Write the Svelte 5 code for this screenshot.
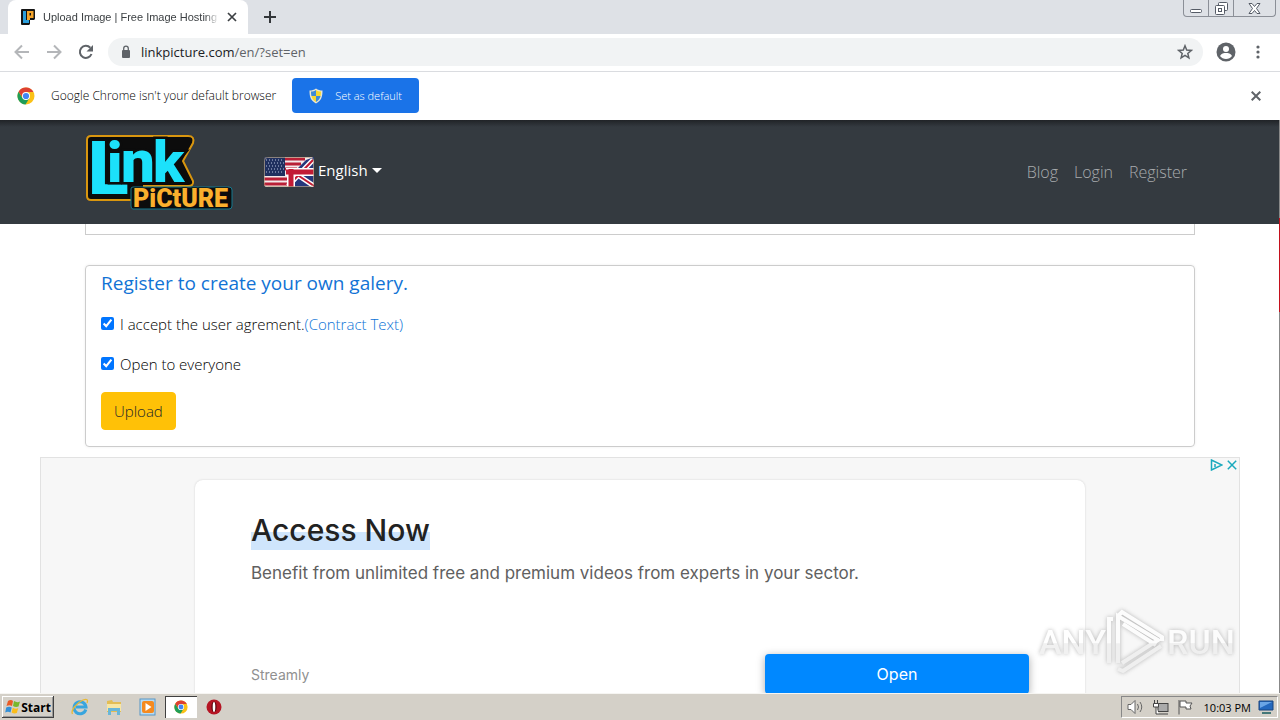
<script lang="ts">
  let accepted = $state(true);
  let open = $state(true);
</script>

<div class="desktop">
  <header class="tabs">
    <div class="tab">
      <svg class="fav" viewBox="0 0 16 16" width="16" height="16"><path d="M2 0h12q1 0 1 1v9l-1 1h-4v4l-1 1H2q-1 0-1-1V1q0-1 1-1z" fill="#151515"/><path d="M3 2h3v9h3v3H3z" fill="#2b9fdc"/><path fill-rule="evenodd" d="M7 2h6.500v7H10v2H7zM9.500 4v2.500h1.500V4z" fill="#f5a52b"/></svg>
      <span class="tabtitle">Upload Image | Free Image Hosting |</span>
      <button class="plain" aria-label="Close tab"><svg width="10" height="10" viewBox="0 0 10 10"><path d="M1 1l8 8M9 1L1 9" stroke="#3c4043" stroke-width="1.700"/></svg></button>
    </div>
    <button class="plain newtab" aria-label="New tab"><svg width="12" height="12" viewBox="0 0 12 12"><path d="M6 0v12M0 6h12" stroke="#33363a" stroke-width="2"/></svg></button>
    <div class="winbtns">
      <button aria-label="Minimize"><svg width="13" height="12" viewBox="0 0 13 12"><rect x=".5" y="7.500" width="11" height="3" rx="1" fill="#fff" stroke="#555b66"/></svg></button>
      <button aria-label="Restore"><svg width="13" height="13" viewBox="0 0 13 13" fill="#fff" stroke="#555b66"><rect x="3.500" y=".5" width="9" height="8" rx="1"/><rect x=".5" y="3.500" width="9" height="9" rx="1"/><rect x="3.500" y="6.500" width="3" height="3"/></svg></button>
      <button class="wide" aria-label="Close"><svg width="13" height="11" viewBox="0 0 13 11"><path d="M1 .5h3l2.500 3L9 .5h3L8.500 5.500l3.500 5H9L6.500 7.500 4 10.500H1l3.500-5z" fill="#fff" stroke="#555b66"/></svg></button>
    </div>
  </header>

  <div class="toolbar">
    <button class="plain" aria-label="Back"><svg width="16" height="16" viewBox="0 0 16 16" fill="none" stroke="#b4b6b9" stroke-width="2"><path d="M15 8H2M8 1.500L1.500 8 8 14.500"/></svg></button>
    <button class="plain" aria-label="Forward"><svg width="16" height="16" viewBox="0 0 16 16" fill="none" stroke="#b4b6b9" stroke-width="2"><path d="M1 8h13M8 1.500L14.500 8 8 14.500"/></svg></button>
    <button class="plain" aria-label="Reload"><svg width="16" height="16" viewBox="0 0 16 16"><path d="M13.500 10A6 6 0 1 1 12.300 3.800" fill="none" stroke="#5f6368" stroke-width="2"/><path d="M15 1v6.500H8.500z" fill="#5f6368"/></svg></button>
    <div class="omni">
      <svg width="10" height="14" viewBox="0 0 10 14"><rect x="1" y="5" width="8" height="8" rx="1" fill="#5f6368"/><path d="M2.700 6V3.500a2.300 2.300 0 0 1 4.600 0V6" fill="none" stroke="#5f6368" stroke-width="1.300"/></svg>
      <span class="url">linkpicture.com<em>/en/?set=en</em></span>
      <button class="plain" aria-label="Bookmark"><svg width="16" height="16" viewBox="0 0 16 16"><path d="M8 1.800l1.700 4.300 4.600.3-3.500 3 1.100 4.500L8 11.400l-3.900 2.500 1.100-4.500-3.500-3 4.600-.3z" fill="none" stroke="#5f6368" stroke-width="1.500"/></svg></button>
    </div>
    <button class="plain" aria-label="Profile"><svg width="20" height="20" viewBox="0 0 20 20"><circle cx="10" cy="10" r="9.500" fill="#5f6368"/><circle cx="10" cy="7" r="3" fill="#fff"/><path d="M4 14c1-2.500 4-3 6-3s5 .5 6 3c-1.500 2-3.500 3-6 3s-4.500-1-6-3z" fill="#fff"/></svg></button>
    <button class="plain menu" aria-label="Menu"><svg width="4" height="14" viewBox="0 0 4 14" fill="#5f6368"><circle cx="2" cy="2" r="1.600"/><circle cx="2" cy="7" r="1.600"/><circle cx="2" cy="12" r="1.600"/></svg></button>
  </div>

  {#snippet chrome(size: number)}
    <svg width={size} height={size} viewBox="0 0 18 18"><circle cx="9" cy="9" r="8.500" fill="#fbc116"/><path d="M1.600 4.700A8.500 8.500 0 0 0 8.500 17.500L12.500 11 9 9 5.500 11z" fill="#1f9d58"/><path d="M1.600 4.700A8.500 8.500 0 0 1 16.400 5H9L5.200 10z" fill="#dd4033"/><circle cx="9" cy="9" r="4" fill="#fff"/><circle cx="9" cy="9" r="3.100" fill="#4285f4"/></svg>
  {/snippet}

  <div class="infobar">
    {@render chrome(18)}
    <span class="info">Google Chrome isn't your default browser</span>
    <button class="default">
      <svg width="14" height="16" viewBox="0 0 14 16"><path d="M7 .5c2 1.500 4 2 6.500 2 0 6-1 10-6.500 13C1.500 12.500.5 8.500.5 2.500 3 2.500 5 2 7 .5z" fill="#e8e6d4"/><path d="M7 2C5.500 3 4 3.500 2 3.600 2 5 2 6.500 2.400 8H7z" fill="#3c8ad8"/><path d="M7 2c1.500 1 3 1.500 5 1.600 0 1.400 0 2.900-.4 4.400H7z" fill="#f5d731"/><path d="M2.400 8H7v6C4.500 12.500 3 10.500 2.400 8z" fill="#f5d731"/><path d="M11.600 8H7v6c2.500-1.500 4-3.500 4.600-6z" fill="#3c8ad8"/></svg>
      Set as default
    </button>
    <button class="plain dismiss" aria-label="Dismiss"><svg width="10" height="10" viewBox="0 0 10 10"><path d="M.7.7l8.600 8.600M9.300.7L.7 9.300" stroke="#5f6368" stroke-width="2"/></svg></button>
  </div>

  <main class="page">
    <nav>
      <div class="container bar">
        <a class="brand" href="#home" aria-label="Link Picture">
          <svg width="148" height="76" viewBox="0 0 148 76">
            <path d="M6 2h97q7 0 5 7L98 27l10 20q1 5-5 5H59v9q0 5-5 5H6q-4 0-4-4V6q0-4 4-4z" fill="#0c0c0c" stroke="#d9960f" stroke-width="2"/>
            <path d="M48 53h96q3 0 3 3v16q0 3-3 3H48q-2 0-2-3V55q0-2 2-2z" fill="#0c0c0c" stroke="#14788f"/>
            <text class="logotext" y="48" font-size="55" fill="#1ce1fb" stroke="#0c0c0c" stroke-width="5"><tspan x="3" y="60" font-size="75">L</tspan><tspan x="22" y="48" font-size="56">i</tspan><tspan x="36" font-size="60">n</tspan><tspan x="68" font-size="57">k</tspan></text>
            <text class="logotext small" x="48" y="73" font-size="25" fill="#fbb02d" stroke="#0c0c0c" stroke-width="1">PiCtURE</text>
          </svg>
        </a>
        <button class="lang">
          <svg width="50" height="30" viewBox="0 0 50 30"><rect width="50" height="30" rx="3" fill="#f3e9ea"/><path d="M0 22h24M0 27h24M21 2h20M21 7h16M21 12h12" stroke="#b91f36" stroke-width="3"/><path d="M0 2Q0 0 3 0h18v19H0z" fill="#20305f"/><path d="M2 3h18M4 6h16M2 9h18M4 12h16M2 15h18" stroke="#b9c4df" stroke-dasharray="1 2"/><path d="M50 0v30H24v-9L42 3z" fill="#26377b"/><path d="M24 29L49 3M32 17l18 12" stroke="#fff" stroke-width="5"/><path d="M24 29L49 3M32 17l18 12" stroke="#c21b35" stroke-width="2"/><path d="M22 15h28M27 12v18" stroke="#fff" stroke-width="8"/><path d="M22 15h28M27 12v18" stroke="#c21b35" stroke-width="5"/><rect x=".5" y=".5" width="49" height="29" rx="3" fill="none" stroke="#b9a58a" stroke-opacity=".7"/></svg>
          <span>English<i class="caret"></i></span>
        </button>
        <div class="links"><a href="#blog">Blog</a><a href="#login">Login</a><a href="#register">Register</a></div>
      </div>
    </nav>

    <div class="container">
      <div class="previous"></div>
      <section class="card">
        <h1><a href="#signup">Register to create your own galery.</a></h1>
        <div class="check"><input id="accept" type="checkbox" bind:checked={accepted} /><label for="accept">I accept the user agrement.</label><a href="#contract">(Contract Text)</a></div>
        <div class="check"><input id="open" type="checkbox" bind:checked={open} /><label for="open">Open to everyone</label></div>
        <button class="upload">Upload</button>
      </section>
    </div>

    <aside class="ad">
      <div class="adchoices">
        <svg width="13" height="12" viewBox="0 0 13 12" fill="none" stroke="#1aa9bd" stroke-width="1.500"><path d="M1.500 1v10L12 6z"/><path d="M5 5v3"/></svg>
        <svg width="10" height="10" viewBox="0 0 10 10"><path d="M.8.8l8.400 8.400M9.200.8L.8 9.200" stroke="#1aa9bd" stroke-width="1.500"/></svg>
      </div>
      <div class="adcard">
        <h2><span>Access Now</span></h2>
        <p>Benefit from unlimited free and premium videos from experts in your sector.</p>
        <div class="adfoot"><span>Streamly</span><button>Open</button></div>
      </div>
    </aside>

    <div class="edge"><i></i></div>
    <div class="watermark">
      <svg width="200" height="70" viewBox="0 0 200 70">
        <defs><linearGradient id="fade" x1="0" y1="0" x2="0" y2="1"><stop offset=".52" stop-color="#fff"/><stop offset=".54" stop-color="#ececec"/></linearGradient></defs>
        <text x="3" y="48">ANY</text><text x="131" y="48">RUN</text>
        <g fill="none" stroke="url(#fade)" stroke-width="4"><path d="M82 57V10l40 24-36 23M73 57V13h4M82 63l5 2 38-25M87 18l33 21M82 10l4-4 40 25v4"/></g>
      </svg>
    </div>
  </main>

  <footer>
    <button class="start"><svg width="16" height="16" viewBox="0 0 16 16"><path d="M3 2q3-2 5 0L7 7Q4.500 5.500 1.500 7z" fill="#ea5b25"/><path d="M9 2q3 2 6 .5L13.500 7.500q-3 1-5.500-.5z" fill="#78b72b"/><path d="M1.200 8.500q3-1.500 5.500 0l-1.200 5q-2.500-1.500-5.300 0z" fill="#3390d8"/><path d="M7.800 8.800q3 1.500 5.500.3l-1.500 5q-2.500 1-5.200-.5z" fill="#fbbd1a"/></svg>Start</button>
    <button class="task" aria-label="Internet Explorer"><svg width="18" height="18" viewBox="0 0 18 18"><path d="M14.800 11.500A6 6 0 1 1 15 9H5" fill="none" stroke="#38a5de" stroke-width="3"/><path d="M1.500 16C-.5 13 5 5 12 2q6-2 4 3" fill="none" stroke="#e8b936" stroke-width="1.300"/></svg></button>
    <button class="task" aria-label="Explorer"><svg width="18" height="18" viewBox="0 0 18 18"><path d="M2 3l5-1 1 2h8v10H2z" fill="#e3bd55"/><path d="M2 6h14v7H2z" fill="#f8e6a3"/><path d="M3 10h12v7h-3v-4H6v4H3z" fill="#69b6d8"/></svg></button>
    <button class="task" aria-label="Media Player"><svg width="18" height="18" viewBox="0 0 18 18"><rect x="1" y="1" width="15" height="16" fill="#b9dcf3" stroke="#5796c6"/><rect x="3" y="3" width="12" height="12" rx="2" fill="#f58a1f"/><path d="M6.500 5v8l6-4z" fill="#fff"/></svg></button>
    <button class="task active" aria-label="Chrome">{@render chrome(14)}</button>
    <button class="task" aria-label="Opera"><svg width="16" height="16" viewBox="0 0 16 16"><circle cx="8" cy="8" r="7.500" fill="#b51524"/><ellipse cx="8" cy="8" rx="2.600" ry="5.200" fill="#5f0710"/><ellipse cx="8" cy="8" rx="1.300" ry="5" fill="#fff"/></svg></button>
    <div class="tray">
      <svg width="18" height="16" viewBox="0 0 18 16" fill="#fff" stroke="#666"><path d="M1 5.500h3l4-4v13l-4-4H1z"/><path d="M10.500 5q2 3 0 6M13 3q3.500 5 0 10" fill="none"/></svg>
      <svg width="18" height="16" viewBox="0 0 18 16" fill="none" stroke="#444"><rect x="6" y="4.500" width="10" height="8" fill="#aaa"/><path d="M7 15h9M4 8v7h3M2.500 1v3M5.500 1v3M1.500 4.500h5V8h-5z" fill="#fff"/></svg>
      <svg width="17" height="16" viewBox="0 0 17 16" fill="#fff" stroke="#555"><path d="M2 1v14.500"/><path d="M3 2h6v2h6l-2 3 1 3H9V8H3z"/></svg>
      <time>10:03 PM</time>
      <svg width="16" height="14" viewBox="0 0 16 14"><path d="M1 1h14v9H1z" fill="#2468be" stroke="#19447f"/><path d="M2 2h12L2 8z" fill="#6ba5e5"/><path d="M4 13h9" stroke="#477" stroke-width="2"/></svg>
    </div>
  </footer>
</div>

<style>
  :global(body) { background: #fff; }
  * { box-sizing: border-box; }
  button { font: inherit; cursor: pointer; }
  a { text-decoration: none; }
  svg { display: block; flex: none; }
  .desktop { height: 100vh; display: flex; flex-direction: column; overflow: hidden; font-family: "Open Sans", "Noto Sans", sans-serif; color: #212529; }
  .plain { border: 0; background: none; padding: 0; display: flex; }

  .tabs { flex: none; display: flex; height: 34px; background: #dee1e6; padding-left: 8px; }
  .tab { width: 240px; display: flex; align-items: center; background: #fff; border-radius: 8px 8px 0 0; padding: 0 11px 0 12px; color: #3c4043; }
  .tabtitle { flex: 1; overflow: hidden; white-space: nowrap; margin: 0 8px 0 7px; font: 11px "Liberation Sans", sans-serif; mask-image: linear-gradient(90deg, #000 92%, transparent 100%); }
  .newtab { align-self: center; margin-left: 16px; }
  .winbtns { margin: 0 4px 0 auto; display: flex; height: 17px; border: 1px solid #8b8f97; border-top: 0; border-radius: 0 0 4px 4px; }
  .winbtns button { width: 25px; border: 0; border-right: 1px solid #8b8f97; background: none; padding: 0; display: flex; align-items: center; justify-content: center; }
  .winbtns .wide { width: 41px; border-right: 0; }

  .toolbar { flex: none; display: flex; align-items: center; height: 38px; padding: 0 20px 2px 14px; gap: 16px; border-bottom: 1px solid #dadce0; }
  .omni { flex: 1; height: 28px; border-radius: 14px; background: #f1f3f4; display: flex; align-items: center; padding: 0 10px 0 13px; margin: 0 -3px 0 -2px; }
  .url { flex: 1; font-size: 13px; margin-left: 10px; color: #202124; }
  .url em { font-style: normal; color: #5f6368; }
  .menu { margin-left: 4px; }

  .infobar { flex: none; display: flex; align-items: center; height: 48px; padding: 0 19px 1px 17px; background: #fff; }
  .info { font-size: 12px; font-weight: 300; color: #000; margin: 0 16px; }
  .default { display: flex; align-items: center; gap: 12px; height: 35px; border: 0; border-radius: 4px; background: #1a73e8; color: #fff; font-size: 11px; font-weight: 300; padding: 0 17px; }
  .dismiss { margin-left: auto; }

  .page { flex: 1; min-height: 0; overflow: hidden; position: relative; background: #fff; font-size: 15px; font-weight: 300; }
  nav { background: linear-gradient(#202327, #343a40 7px); height: 104px; }
  .container { max-width: 1140px; margin: 0 auto; padding: 0 15px; }
  .bar { display: flex; align-items: center; height: 100%; }
  .logotext { font-family: "Roboto", sans-serif; font-weight: 900; paint-order: stroke; }
  .lang { display: flex; align-items: center; gap: 4px; border: 0; background: none; color: #fff; padding: 0; margin-left: 31px; font-weight: 400; }
  .lang span { display: flex; align-items: center; gap: 4px; padding-bottom: 4px; }
  .caret { border: 5px solid transparent; border-top-color: #fff; border-bottom: 0; }
  .links { margin-left: auto; display: flex; gap: 16px; padding-right: 8px; font-size: 16px; }
  .links a { color: #a8abae; }

  .previous { height: 11px; border: 1px solid #ccc; border-top: 0; }
  .card { margin-top: 30px; border: 1px solid #ccc; border-radius: 4px; padding: 4px 15px 16px; box-shadow: 0 0 3px #eee; color: #000; }
  h1 { margin: 0 0 16px; font-size: 19px; line-height: 26px; font-weight: 400; }
  h1 a { color: #1273d5; }
  .check { display: flex; align-items: center; height: 24px; margin-bottom: 16px; }
  .check input { margin: 0 6px 2px 0; width: 13px; height: 13px; }
  .check a { color: #0b72d6; }
  .upload { display: block; height: 38px; border: 1px solid #ffc107; border-radius: 4px; background: #ffc107; color: #212529; padding: 0 12px; }

  .ad { position: relative; margin: 10px 40px 0; border: 1px solid #e2e2e2; background: #f7f7f7; padding: 22px 154px 0; height: 300px; font-family: "Inter", sans-serif; font-weight: 400; }
  .adchoices { position: absolute; top: 1px; right: 2px; display: flex; align-items: center; gap: 4px; }
  .adcard { background: #fff; height: 100%; border-radius: 8px 8px 0 0; padding: 29px 56px 0; box-shadow: 0 0 2px #ccc; }
  h2 { margin: 0; font-size: 30px; font-weight: 500; line-height: 42px; color: #222; }
  h2 span { display: inline-block; line-height: 40px; background: linear-gradient(transparent 55%, #cfe5fc 55%); }
  .adcard p { margin: 8px 0 0; font-size: 17px; line-height: 28px; color: #606060; }
  .adfoot { display: flex; justify-content: space-between; align-items: center; margin-top: 67px; font-size: 14px; color: #909090; }
  .adfoot button { width: 264px; height: 40px; border: 0; border-radius: 4px; background: #0088ff; color: #fff; font-size: 16px; box-shadow: 0 2px 8px #aaa; }
  .edge { position: absolute; top: 0; right: 0; bottom: 0; width: 1px; background: #888; padding-top: 98px; }
  .edge i { display: block; height: 94px; width: 1px; background: #c4101c; }
  .watermark { position: absolute; right: 44px; bottom: 17px; filter: drop-shadow(0 0 2px #999); opacity: .7; }
  .watermark text { font-family: "Roboto", sans-serif; font-size: 34px; font-weight: 500; fill: url(#fade); }

  footer { flex: none; height: 27px; display: flex; align-items: center; background: #d4d0c8; border-top: 1px solid #f6f5f2; }
  footer button { background: none; border: 0; padding: 0; display: flex; align-items: center; justify-content: center; }
  .start { width: 52px; height: 22px; margin: 0 9px 0 2px; font-weight: 700; font-size: 12px; color: #000; box-shadow: inset -1px -1px #404040, inset 1px 1px #fff, inset -2px -2px #999; }
  .task { width: 34px; height: 22px; }
  footer .active { width: 32px; background: #fff; box-shadow: inset 1px 1px #404040, inset -1px -1px #fff; }
  .tray { margin-left: auto; margin-right: 2px; height: 22px; display: flex; align-items: center; gap: 7px; padding: 0 3px 0 5px; border: 1px solid #888; border-right-color: #fff; border-bottom-color: #fff; color: #000; }
  .tray time { font-size: 11px; margin-left: 3px; }
</style>
